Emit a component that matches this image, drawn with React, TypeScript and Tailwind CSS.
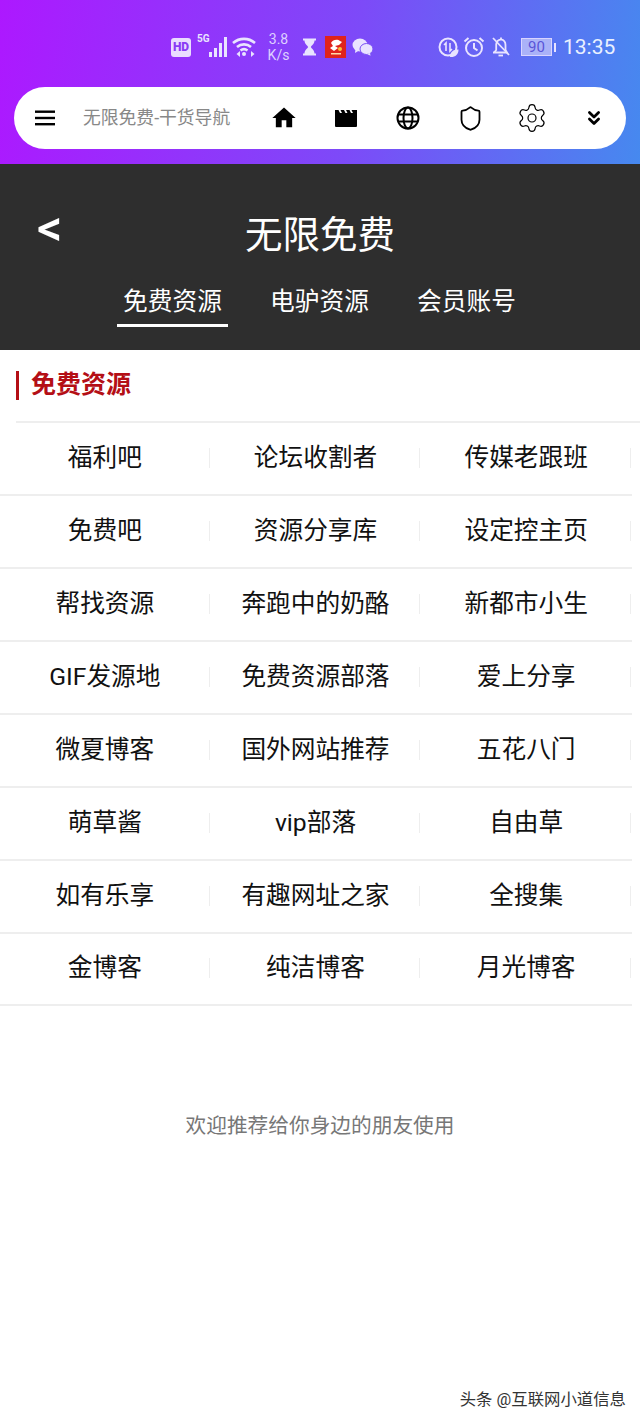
import { Settings, Shield, ChevronsDown } from "lucide-react";
import { MdHome } from "react-icons/md";

const rows = [
  ["福利吧", "论坛收割者", "传媒老跟班"],
  ["免费吧", "资源分享库", "设定控主页"],
  ["帮找资源", "奔跑中的奶酪", "新都市小生"],
  ["GIF发源地", "免费资源部落", "爱上分享"],
  ["微夏博客", "国外网站推荐", "五花八门"],
  ["萌草酱", "vip部落", "自由草"],
  ["如有乐享", "有趣网址之家", "全搜集"],
  ["金博客", "纯洁博客", "月光博客"],
];

function StatusBar() {
  return (
    <div className="flex h-[87px] items-start justify-end pt-[32px] pr-[25px] text-[#e9e4ff]">
      <div className="flex h-[30px] items-center">
        {/* HD */}
        <span className="flex h-[19px] w-[20px] items-center justify-center rounded-[3px] bg-[#eadcff] text-[12px] leading-none font-black text-[#8a3cf5]">HD</span>
        {/* 5G + signal */}
        <div className="relative ml-[6px] h-[22px] w-[33px]">
          <span className="absolute -top-[3px] left-0 text-[10px] leading-[12px] font-bold">5G</span>
          <svg width="33" height="22" viewBox="0 0 33 22" fill="currentColor">
            <rect x="12" y="16" width="3" height="5" />
            <rect x="17" y="12" width="3" height="9" />
            <rect x="22" y="7" width="3" height="14" />
            <rect x="27" y="1" width="3" height="20" />
          </svg>
        </div>
        {/* wifi */}
        <svg className="ml-[2px]" width="25" height="22" viewBox="0 0 25 22" fill="none" stroke="currentColor" strokeWidth="2.6">
          <path d="M1 7 C7.5 1.5 16.5 1.5 23 7" />
          <path d="M5 11 C9 7.5 15 7.5 19 11" />
          <path d="M8.5 14.5 C10.5 13 13.5 13 15.5 14.5" />
          <circle cx="12" cy="18" r="2" fill="currentColor" stroke="none" />
          <path d="M19 15 l3.5 3 -3.5 3 z" fill="currentColor" stroke="none" />
          <path d="M8 15 l-3.5 3 3.5 3 z" fill="currentColor" stroke="none" />
        </svg>
        <div className="ml-[10px] flex w-[23px] flex-col items-center text-[14px] leading-[16px] text-[#ddd0ff]">
          <span>3.8</span>
          <span>K/s</span>
        </div>
        {/* hourglass */}
        <svg className="ml-[12px]" width="15" height="18" viewBox="0 0 15 18" fill="currentColor">
          <path d="M1 0.5 H14 V2.5 H12.5 C12.5 6 9.5 7.5 8.8 9 C9.5 10.5 12.5 12 12.5 15.5 H14 V17.5 H1 V15.5 H2.5 C2.5 12 5.5 10.5 6.2 9 C5.5 7.5 2.5 6 2.5 2.5 H1 Z" />
        </svg>
        {/* red app */}
        <div className="ml-[8px] flex h-[22px] w-[21px] items-center justify-center bg-[#e0231c]">
          <svg width="18" height="18" viewBox="0 0 18 18">
            <path d="M4 5 C6 1 11 1 13 3 L15 4 L12 7 L8 8 L11 10 L7 13 L3 10 L6 8 Z" fill="#ffffff" />
            <circle cx="13" cy="11" r="2" fill="#f8c23a" />
            <rect x="4" y="15" width="10" height="1.5" fill="#ffd9a8" />
          </svg>
        </div>
        {/* wechat */}
        <svg className="ml-[6px]" width="21" height="18" viewBox="0 0 21 18" fill="currentColor">
          <ellipse cx="8" cy="7" rx="7.5" ry="6.5" />
          <path d="M3.5 11 L3 15 L7 12.5 Z" />
          <ellipse cx="14.5" cy="11" rx="6.5" ry="5.5" stroke="#7a50f5" strokeWidth="1" />
          <path d="M18 15 L18.5 17.8 L15 16 Z" />
        </svg>
        {/* data saver */}
        <svg className="ml-[65px]" width="21" height="21" viewBox="0 0 21 21" fill="none" stroke="currentColor">
          <circle cx="10" cy="10" r="8.5" strokeWidth="2" />
          <path d="M6 8 L8 6 V14 M12 6 V14 L14 12" strokeWidth="1.6" />
          <path d="M12 20 C12 15 15 12.5 20.5 12.5 C20.5 17.5 17 20.5 12 20 Z" fill="currentColor" stroke="none" />
        </svg>
        {/* alarm */}
        <svg className="ml-[4px]" width="22" height="22" viewBox="0 0 22 22" fill="none" stroke="currentColor" strokeWidth="2">
          <circle cx="11" cy="12" r="8" />
          <path d="M11 7 V12 L14.5 14.5" />
          <path d="M1.5 5.5 L5.5 2 M20.5 5.5 L16.5 2" />
        </svg>
        {/* muted bell */}
        <svg className="ml-[6px]" width="20" height="22" viewBox="0 0 20 22" fill="none" stroke="currentColor" strokeWidth="1.8">
          <path d="M2 16.5 H16 L14.5 14 V9 C14.5 6 12.5 3.8 10 3.3 V1.5 M10 3.3 C7.5 3.8 5.5 5.5 5.2 8 V14 L3.5 16" />
          <path d="M7.5 19.5 H12" />
          <path d="M2 2 L18 19" />
        </svg>
        {/* battery */}
        <div className="ml-[10px] flex items-center">
          <div className="flex h-[18px] w-[31px] items-center justify-center border border-[#d8d4ff] bg-[#aab2f8]">
            <span className="text-[15px] leading-none text-[#5a55d8]">90</span>
          </div>
          <div className="ml-[2px] h-[9px] w-[2px] bg-[#e9e4ff]" />
        </div>
        <span className="ml-[7px] w-[52px] text-[21px] leading-none text-[#e9f0ff]">13:35</span>
      </div>
    </div>
  );
}

function ToolBar() {
  return (
    <div className="mx-[14px] flex h-[62px] items-center rounded-[31px] bg-white pl-[21px]">
      <svg width="20" height="16" viewBox="0 0 20 16" fill="#000000">
        <rect y="0.5" width="20" height="2.4" />
        <rect y="6.8" width="20" height="2.4" />
        <rect y="13" width="20" height="2.4" />
      </svg>
      <span className="ml-[28px] w-[160px] text-[17.8px] whitespace-nowrap text-[#888888]">无限免费-干货导航</span>
      <MdHome className="ml-[27px] text-black" size={28} />
      {/* film */}
      <svg className="ml-[36px]" width="24" height="20" viewBox="0 0 24 20" fill="#000000">
        <path d="M1 2 H4.5 L6 5 H8 L6.5 2 H10 L11.5 5 H13.5 L12 2 H15.5 L17 5 H19 L17.5 2 H23 V18 A1 1 0 0 1 22 19 H2 A1 1 0 0 1 1 18 Z" />
      </svg>
      {/* globe */}
      <svg className="ml-[38px]" width="24" height="24" viewBox="0 0 24 24" fill="none" stroke="#000000" strokeWidth="2">
        <circle cx="12" cy="12" r="10.5" />
        <ellipse cx="12" cy="12" rx="4.5" ry="10.5" />
        <path d="M2 8.5 H22 M2 15.5 H22" />
      </svg>
      <Shield className="ml-[37px]" size={27} strokeWidth={1.6} color="#000000" />
      <Settings className="ml-[32px]" size={32} strokeWidth={0.9} color="#000000" />
      <ChevronsDown className="ml-[35px]" size={22} strokeWidth={3} color="#000000" />
    </div>
  );
}

function DarkHeader() {
  return (
    <div className="relative h-[186px] bg-[#2e2e2e] text-white">
      <span className="absolute top-[34px] left-[37px] text-[50px] leading-[60px] font-medium">&lt;</span>
      <h1 className="pt-[47px] text-center text-[37.5px] leading-[48px]">无限免费</h1>
      <div className="mt-[23px] flex justify-center pr-[1px]">
        <div className="h-[45px] w-[111px] border-b-[3px] border-white pt-[2px] text-center text-[24.7px] leading-[36px]">免费资源</div>
        <div className="ml-[36px] w-[111px] pt-[2px] text-center text-[24.7px] leading-[36px]">电驴资源</div>
        <div className="ml-[36px] w-[111px] pt-[2px] text-center text-[24.7px] leading-[36px]">会员账号</div>
      </div>
    </div>
  );
}

export default function App() {
  return (
    <div className="flex h-[1422px] w-[640px] flex-col overflow-hidden bg-white font-['Roboto','Noto_Sans_CJK_SC',sans-serif]">
      <div className="h-[164px] bg-[linear-gradient(97deg,#ad18ff_0%,#7d4af8_55%,#4689ef_100%)]">
        <StatusBar />
        <ToolBar />
      </div>
      <DarkHeader />

      <div className="ml-[16px] flex h-[73px] items-start border-b-2 border-[#eeeeee] pt-[21px]">
        <div className="h-[29px] w-[3px] bg-[#b40f16]" />
        <h2 className="ml-[12px] text-[25px] leading-[27px] font-bold text-[#b40f16]">免费资源</h2>
      </div>

      <div className="w-[632px]">
        {rows.map((row) => (
          <div key={row[0]} className="grid h-[73px] grid-cols-3 border-b-2 border-[#eeeeee] pb-[2px] last:h-[72px]">
            {row.map((name) => (
              <div key={name} className="flex items-center">
                <span className="flex-1 pl-[1px] text-center text-[24.7px] leading-[34px] text-[#111111]">{name}</span>
                <div className="mr-[1px] h-[20px] w-px bg-[#eeeeee]" />
              </div>
            ))}
          </div>
        ))}
      </div>

      <p className="mt-[105px] text-center text-[20.7px] leading-[30px] text-[#777777]">欢迎推荐给你身边的朋友使用</p>

      <div className="mt-auto flex justify-end pr-[14px] pb-[10px]">
        <span className="text-[16.4px] leading-[24px] text-[#333333]">头条 @互联网小道信息</span>
      </div>
    </div>
  );
}
